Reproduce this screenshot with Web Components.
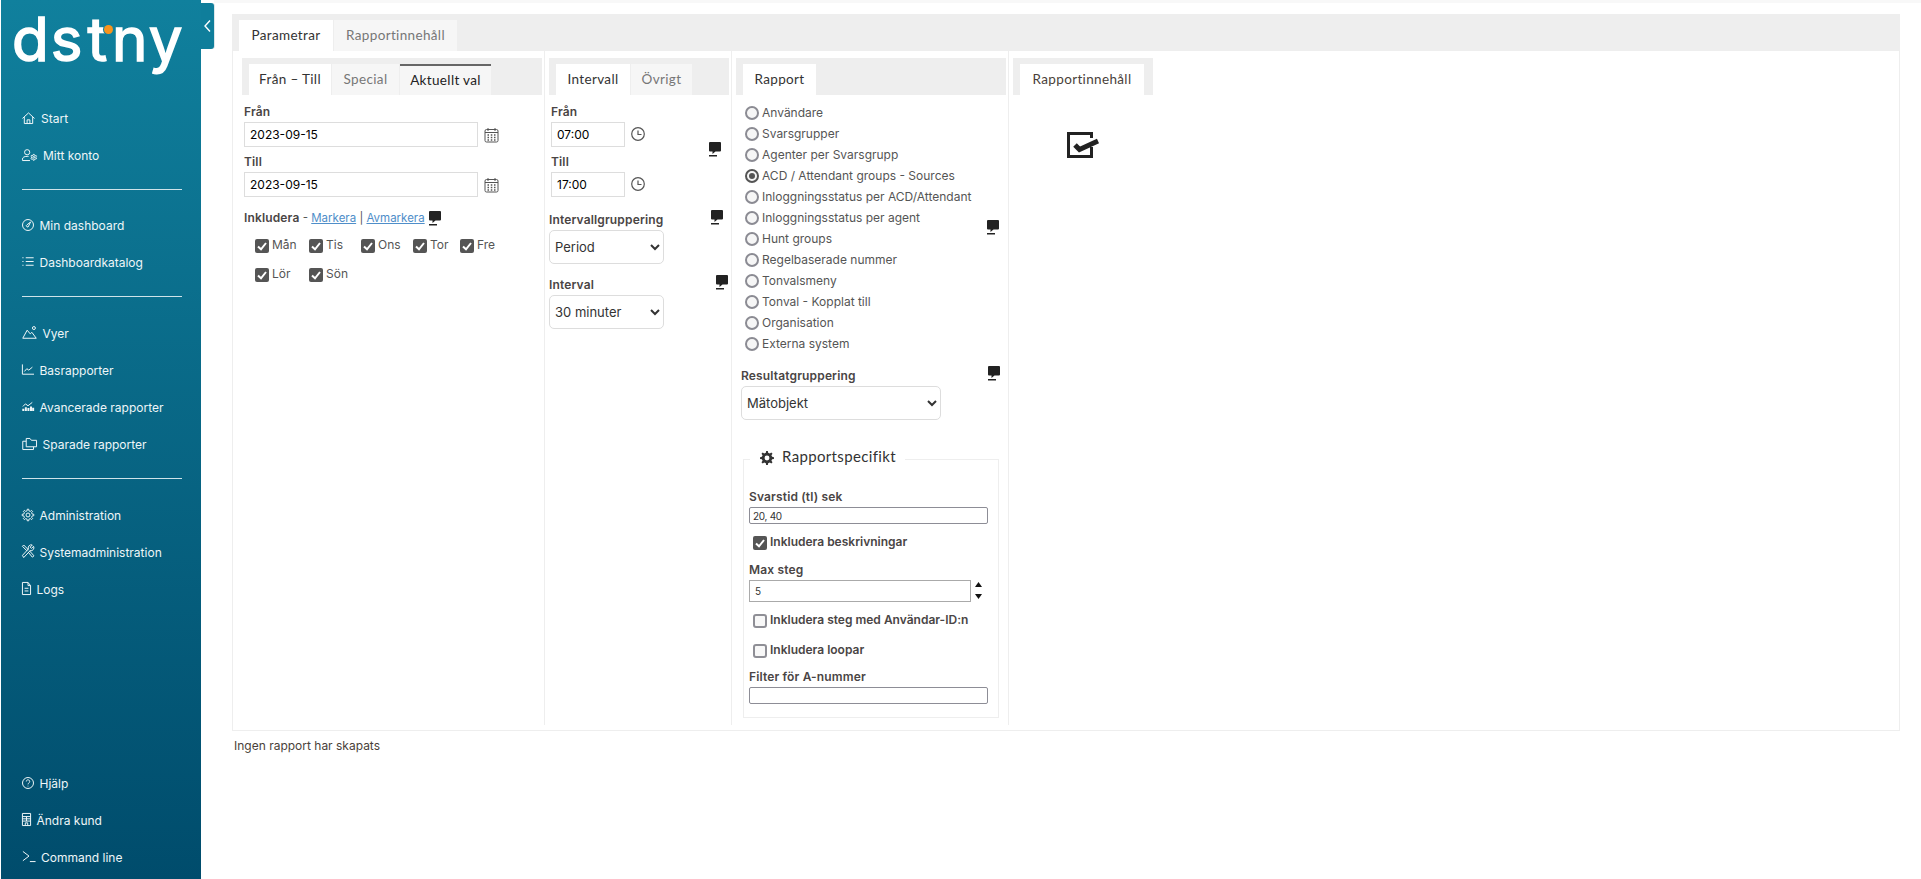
<!DOCTYPE html>
<html lang="sv">
<head>
<meta charset="utf-8">
<title>Rapporter</title>
<style>
  html, body { margin: 0; height: 100%; background: #fff; }
  body { font-family: "Inter", "Liberation Sans", sans-serif; }
</style>
</head>
<body>
<dst-app>
  <dst-sidebar slot="side">
    <dst-nav icon="home" tx="20" w="13" h="12">Start</dst-nav>
    <dst-nav icon="account" tx="22" w="15" h="12">Mitt konto</dst-nav>
    <dst-rule></dst-rule>
    <dst-nav icon="gauge" tx="18.5" w="12" h="12">Min dashboard</dst-nav>
    <dst-nav icon="list" tx="18.5" w="12" h="9">Dashboardkatalog</dst-nav>
    <dst-rule style="--mb:18px"></dst-rule>
    <dst-nav icon="views" tx="21.5" w="15" h="13">Vyer</dst-nav>
    <dst-nav icon="chart" tx="18.5" w="12" h="11">Basrapporter</dst-nav>
    <dst-nav icon="bars" tx="18.5" w="12" h="9">Avancerade rapporter</dst-nav>
    <dst-nav icon="folder" tx="21.5" w="15" h="12">Sparade rapporter</dst-nav>
    <dst-rule style="--mb:18px"></dst-rule>
    <dst-nav icon="gear" tx="18.5" w="12" h="12">Administration</dst-nav>
    <dst-nav icon="tools" tx="18.5" w="12" h="13">Systemadministration</dst-nav>
    <dst-nav icon="doc" tx="15.5" w="9" h="13">Logs</dst-nav>
    <dst-nav slot="bottom" icon="help" tx="18.5" w="12" h="12">Hjälp</dst-nav>
    <dst-nav slot="bottom" icon="building" tx="15.5" w="9" h="13">Ändra kund</dst-nav>
    <dst-nav slot="bottom" icon="prompt" tx="20" w="14" h="11">Command line</dst-nav>
  </dst-sidebar>

  <dst-tabbar class="top">
    <dst-tab active width="94">Parametrar</dst-tab>
    <dst-tab muted width="123">Rapportinnehåll</dst-tab>
  </dst-tabbar>

  <dst-columns>
    <dst-panel style="--w:312px;--pl:9px">
      <dst-tabbar slot="head">
        <dst-tab active width="82">Från – Till</dst-tab>
        <dst-tab muted width="67">Special</dst-tab>
        <dst-tab current width="91">Aktuellt val</dst-tab>
      </dst-tabbar>
      <dst-field label="Från" first><dst-date value="2023-09-15"></dst-date></dst-field>
      <dst-field label="Till"><dst-date value="2023-09-15"></dst-date></dst-field>
      <dst-days></dst-days>
    </dst-panel>

    <dst-panel style="--w:187px;--pl:4px">
      <dst-tabbar slot="head">
        <dst-tab active width="74">Intervall</dst-tab>
        <dst-tab muted width="61">Övrigt</dst-tab>
      </dst-tabbar>
      <dst-comment style="--x:164px;--y:91px"></dst-comment>
      <dst-field label="Från" first><dst-time value="07:00"></dst-time></dst-field>
      <dst-field label="Till"><dst-time value="17:00"></dst-time></dst-field>
      <dst-comment style="--x:166px;--y:159px"></dst-comment>
      <dst-pick label="Intervallgruppering" width="115" style="--mt:16px" value="Period"></dst-pick>
      <dst-comment style="--x:171px;--y:224px"></dst-comment>
      <dst-pick label="Interval" width="115" style="--mt:14px" value="30 minuter"></dst-pick>
    </dst-panel>

    <dst-panel style="--w:277px;--pl:4px">
      <dst-tabbar slot="head"><dst-tab active width="73">Rapport</dst-tab></dst-tabbar>
      <dst-radios style="--mt:7px">
        <dst-radio>Användare</dst-radio>
        <dst-radio>Svarsgrupper</dst-radio>
        <dst-radio>Agenter per Svarsgrupp</dst-radio>
        <dst-radio checked>ACD / Attendant groups - Sources</dst-radio>
        <dst-radio>Inloggningsstatus per ACD/Attendant</dst-radio>
        <dst-radio>Inloggningsstatus per agent</dst-radio>
        <dst-radio>Hunt groups</dst-radio>
        <dst-radio>Regelbaserade nummer</dst-radio>
        <dst-radio>Tonvalsmeny</dst-radio>
        <dst-radio>Tonval - Kopplat till</dst-radio>
        <dst-radio>Organisation</dst-radio>
        <dst-radio>Externa system</dst-radio>
      </dst-radios>
      <dst-comment style="--x:255px;--y:169px"></dst-comment>
      <dst-comment style="--x:256px;--y:315px"></dst-comment>
      <dst-pick label="Resultatgruppering" width="200" style="--mt:15px;--ml:5px" value="Mätobjekt"></dst-pick>
      <dst-specific></dst-specific>
    </dst-panel>

    <dst-panel style="--w:auto;--pl:4px;--hw:140px">
      <dst-tabbar slot="head"><dst-tab active width="124" dark>Rapportinnehåll</dst-tab></dst-tabbar>
      <dst-done></dst-done>
    </dst-panel>
  </dst-columns>
  <dst-status>Ingen rapport har skapats</dst-status>
</dst-app>

<script>
// cog outline, used in the nav and in the legend
function gearPath(cx, cy, ro, ri, n) {
  let d = "";
  for (let i = 0; i < n; i++) {
    const a = (i / n) * Math.PI * 2, s = Math.PI / n;
    const pts = [[ri, a - s * .55], [ro, a - s * .32], [ro, a + s * .32], [ri, a + s * .55]];
    for (const [r, t] of pts) {
      d += (d ? "L" : "M") + (cx + r * Math.sin(t)).toFixed(2) + " " + (cy - r * Math.cos(t)).toFixed(2);
    }
  }
  return d + "z";
}

const ICONS = {
  home: ["1 1 14 13", `<path d="M1.5 8 8 2l6.5 6M3.5 6.5v7h9v-7M6.5 13.5v-4h3v4"/>`],
  account: ["0 0 16 13", `<circle cx="5.5" cy="3.5" r="2.8"/><path d="M.5 12.5V11c0-2 2-3 5-3H7M.5 12.500h8"/><path d="${gearPath(12.5, 9, 3.2, 2.4, 6)}"/><circle cx="12.5" cy="9" r="1"/>`],
  gauge: ["1 1 14 14", `<circle cx="8" cy="8" r="6.4"/><path d="M11 4.500 8.700 9.200a1.300 1.300 0 1 1-1.900-1.400z"/>`],
  list: ["0 2 16 12", `<path d="M5 3h10.500M5 8h10.500M5 13h10.500M.5 3H2M.5 8H2M.5 13H2" stroke-width="1.2"/>`],
  views: ["0 0 16 14", `<path d="M.8 13.200 5.500 4.500l3.300 4 1.700-1.700 4.700 6.400z"/><circle cx="12.7" cy="2.2" r="1.6"/>`],
  chart: ["1 1 15 14", `<path d="M1.500 1.500V14H16M4 10.500l3-3.500 2.500 1.800L14 5"/>`],
  bars: ["1 2 14 12", `<path d="M2 8l3-3.500 3 2.500 5-4.500"/><path d="M2.500 14v-3M5.500 14V9M8.500 14v-4M11.500 14V8M14 14V9.500" stroke-width="2"/>`],
  folder: ["0 1 16 13", `<path d="M4.500 10.500V1.500h4L10 3.500h5.500v7z"/><path d="M4.500 4.500H.8V13.500h11.500v-3"/>`],
  gear: ["1 1 14 14", `<path d="${gearPath(8, 8, 6.8, 5, 8)}"/><circle cx="8" cy="8" r="2.3"/>`],
  tools: ["1 1 14 15", `<path d="M1.500 2.500l1.500-1.500 5 5-1.500 1.500zM8 9l5 6 2-1.500L9.500 7.500M14.500 2.500 12 5l-1.500-1.500L13 1a3.500 3.500 0 0 0-4.500 4.500L1.500 13l1.500 2.500L10.500 7.500a3.500 3.500 0 0 0 4-5z"/>`],
  doc: ["2.5 1 10.5 14.5", `<path d="M3 1.500h6.500L12.500 5v10H3zM9.500 1.500V5h3M5.500 8H10M5.500 11H10"/>`],
  help: ["1 1 14 14", `<circle cx="8" cy="8" r="6.4"/><path d="M6 6.200a2 2 0 1 1 3 1.800c-.7.400-1 .800-1 1.600M8 11.200v.8"/>`],
  building: ["2.5 1 11 14.5", `<path d="M3 1.500h10V15H3zM3 5h10M8 5v5M3 7.500h10M3 10h10M6.500 15v-3h3v3"/>`],
  prompt: ["0 1 16 13", `<path d="M1 1.500l7 5.500-7 5.500M9 13.500h6.500"/>`]
};

function define(name, css, html, init) {
  customElements.define(name, class extends HTMLElement {
    constructor() {
      super();
      this.attachShadow({ mode: "open" });
    }
    connectedCallback() {
      this.shadowRoot.innerHTML = `<style>${css}</style>${typeof html === "function" ? html(this) : html}`;
      if (init) init(this);
    }
  });
}

const SANS = `"Inter", "Liberation Sans", sans-serif`;
const ROUND = `"Lato", "Open Sans", sans-serif`;
const LABEL = `font: 600 12px/14px ${SANS}; letter-spacing: .15px; color: #4a4545;`;

define("dst-app", `
  :host { display: flex; min-height: 879px; box-sizing: border-box; padding-left: 1px; }
  .main { flex: 1; min-width: 0; padding: 14px 21px 0 31px; position: relative; }
  .main::before { content: ""; position: absolute; left: 13px; right: 0; top: 0; height: 3px; background: #f8f8f8; }
`, `<slot name="side"></slot><div class="main"><slot></slot></div>`);

define("dst-sidebar", `
  :host {
    display: flex; flex-direction: column; width: 200px; height: 879px; box-sizing: border-box;
    background: linear-gradient(#10809d, #004c6c); position: relative; color: #fff;
    font: 12px/37px ${SANS};
  }
  .toggle {
    position: absolute; left: 200px; top: 3px; width: 13px; height: 46px; background: #0f7e9b;
    border-radius: 0 3px 3px 0; display: flex; align-items: center; justify-content: center;
    box-shadow: 1px 0 0 #dbe7ea;
  }
  .logo { height: 79px; box-sizing: border-box; position: relative; padding: 9px 0 0 11px; }
  .word {
    font: 400 60px/1 ${SANS}; letter-spacing: 2px; color: #fff; display: block;
    -webkit-text-stroke: 1.6px #fff; white-space: nowrap;
  }
  .word span { margin-left: 3px; }
  .dot { position: absolute; left: 103px; top: 25px; width: 9px; height: 9px; border-radius: 50%; background: #f7941d; box-shadow: 0 0 0 1px #10809d; }
  .nav { padding: 21px 0 0; flex: 1; }
  .bottom { padding-bottom: 3px; }
`, `
  <div class="toggle"><svg width="9" height="14" viewBox="0 0 9 14" fill="none" stroke="#fff" stroke-width="1.4"><path d="M7 1.500 2 7l5 5.500"/></svg></div>
  <div class="logo"><span class="word">ds<span>t</span><span>ny</span></span><i class="dot"></i></div>
  <div class="nav"><slot></slot></div>
  <div class="bottom"><slot name="bottom"></slot></div>
`);

define("dst-nav", `
  :host { display: flex; align-items: center; height: 37px; padding-left: 21px; color: #eef6f8; white-space: nowrap; }
  .ic { display: flex; align-items: center; flex: none; margin-right: -1px; }
  svg { fill: none; stroke: #eef6f8; margin-top: -2px; overflow: visible; }
  svg * { vector-effect: non-scaling-stroke; }
`, el => {
  const [vb, body] = ICONS[el.getAttribute("icon")];
  const a = n => el.getAttribute(n);
  return `<span class="ic" style="width:${a("tx")}px"><svg viewBox="${vb}" width="${a("w")}" height="${a("h")}" preserveAspectRatio="none">${body}</svg></span><slot></slot>`;
});

define("dst-rule", `
  :host { display: block; height: 1px; background: #cfe3e9; width: 160px; margin: 15px 0 var(--mb, 17px) 21px; }
`, ``);

define("dst-tabbar", `
  :host { display: flex; align-items: flex-end; height: 37px; box-sizing: border-box; padding-left: 7px; background: #eee; gap: 1px; }
`, `<slot></slot>`);

define("dst-tab", `
  :host {
    display: flex; align-items: center; justify-content: center; height: 31px; box-sizing: border-box;
    background: #fff; color: #333; font: 13.5px/1 ${ROUND}; letter-spacing: .35px; white-space: nowrap;
  }
  :host([muted]) { background: #f6f6f6; color: #777; }
  :host([current]) { background: #f6f6f6; color: #222; border-top: 2px solid #666; }
  :host([dark]) { color: #4a3f3a; }
`, el => {
  el.style.width = el.getAttribute("width") + "px";
  return `<slot></slot>`;
});

define("dst-columns", `
  :host {
    display: flex; height: 680px; box-sizing: border-box; border: 1px solid #eee; border-top: 0;
    padding-bottom: 5px;
  }
`, `<slot></slot>`);

define("dst-panel", `
  :host {
    display: block; flex: 0 0 var(--w); box-sizing: border-box; padding: 7px 2px 0 var(--pl);
    border-right: 1px solid #eee; position: relative; color: #444;
    font: 12px/14px ${SANS};
  }
  :host(:last-child) { flex: 1; border-right: 0; }
  .head { width: var(--hw, auto); }
`, `<div class="head"><slot name="head"></slot></div><slot></slot>`);

define("dst-field", `
  :host { display: block; margin-top: 8px; padding-left: 2px; }
  :host([first]) { margin-top: 10px; }
  label { display: block; ${LABEL} margin-bottom: 3px; }
`, el => `<label>${el.getAttribute("label")}</label><slot></slot>`);

const BOXINPUT = `
  input {
    display: block; box-sizing: border-box; height: 25px; border: 1px solid #ddd; background: #fff;
    font: 12px ${SANS}; color: #000; padding: 0 5px; margin: 0; outline: 0; border-radius: 0;
  }`;

define("dst-date", `
  :host { display: flex; align-items: center; gap: 6px; }
  ${BOXINPUT}
  input { width: 234px; }
  svg { width: 15px; height: 16px; fill: none; stroke: #555; }
`, el => `<input value="${el.getAttribute("value")}"><svg viewBox="0 0 15 16">
  <rect x="1" y="2.5" width="13" height="12.5" rx="1.5"/><path d="M1 5.500h13M4 1v3M11 1v3"/>
  <path d="M3.500 8H5M6.800 8h1.500M10 8h1.500M3.500 10.500H5M6.800 10.500h1.500M10 10.500h1.500M3.500 13H5M6.800 13h1.500M10 13h1.500" stroke-width="1.4"/></svg>`);

define("dst-time", `
  :host { display: flex; align-items: center; gap: 6px; }
  ${BOXINPUT}
  input { width: 74px; }
  svg { width: 14px; height: 14px; fill: none; stroke: #555; stroke-width: 1.2; margin-top: -1px; }
`, el => `<input value="${el.getAttribute("value")}"><svg viewBox="0 0 14 14"><circle cx="7" cy="7" r="6.3"/><path d="M7 3.500v4h3.500"/></svg>`);

define("dst-comment", `
  :host { position: absolute; left: var(--x); top: var(--y); width: 12px; height: 15px; display: block; }
  svg { display: block; fill: #222; }
`, `<svg width="12" height="15" viewBox="0 0 12 15"><path d="M1 0h10a1 1 0 0 1 1 1v7.500a1 1 0 0 1-1 1H6.500L3.500 12V9.500H1a1 1 0 0 1-1-1V1a1 1 0 0 1 1-1z"/><rect x="0" y="13" width="8" height="1.5"/></svg>`);

define("dst-check", `
  :host { display: inline-flex; align-items: center; color: var(--c, #555); font: var(--f, 400 12px/14px ${SANS}); white-space: nowrap; }
  .box { width: 14px; height: 14px; box-sizing: border-box; border-radius: 2px; margin-right: 3px; flex: none; display: block; }
  .on { background: #555; }
  .off { background: #f8f8f8; border: 2px solid #8f8f96; border-radius: 3px; }
  span { margin-top: -2px; }
`, el => (el.hasAttribute("checked")
  ? `<svg class="box on" viewBox="0 0 14 14" fill="none" stroke="#fff" stroke-width="2"><path d="M3 7.500 6 10.300 11 4"/></svg>`
  : `<i class="box off"></i>`) + `<span><slot></slot></span>`);

define("dst-days", `
  :host { display: block; padding-left: 2px; margin-top: 14px; font-size: 11.5px; color: #555; }
  b { ${LABEL} }
  a { color: #4f8ec9; text-decoration: underline; }
  .wrap { position: relative; }
  .row { display: flex; padding-left: 11px; margin-top: 14px; height: 14px; }
  .row + .row { margin-top: 15px; }
  .c { display: block; }
  dst-comment { --x: 185px; --y: 0px; }
`, `
  <div class="wrap"><b>Inkludera</b> - <a>Markera</a> | <a>Avmarkera</a><dst-comment></dst-comment></div>
  <div class="row">
    <span class="c" style="width:54px"><dst-check checked>Mån</dst-check></span>
    <span class="c" style="width:52px"><dst-check checked>Tis</dst-check></span>
    <span class="c" style="width:52px"><dst-check checked>Ons</dst-check></span>
    <span class="c" style="width:47px"><dst-check checked>Tor</dst-check></span>
    <span class="c"><dst-check checked>Fre</dst-check></span>
  </div>
  <div class="row">
    <span class="c" style="width:54px"><dst-check checked>Lör</dst-check></span>
    <span class="c"><dst-check checked>Sön</dst-check></span>
  </div>
`);

define("dst-pick", `
  :host { display: block; margin-top: var(--mt, 0); margin-left: var(--ml, 0); }
  label { display: block; ${LABEL} margin-bottom: 3px; }
  select {
    display: block; box-sizing: border-box; height: 34px; border: 1px solid #ddd; border-radius: 5px;
    background-color: #fff; color: #333; font: 13px ${SANS}; padding: 0 1px; margin: 0; outline: 0;
  }
`, el => `<label>${el.getAttribute("label")}</label><select style="width:${el.getAttribute("width")}px"><option>${el.getAttribute("value")}</option></select>`);

define("dst-radios", `
  :host { display: block; margin-top: var(--mt, 0); padding-left: 9px; }
`, `<slot></slot>`);

define("dst-radio", `
  :host { display: flex; align-items: center; height: 21px; color: #555; font-size: 12px; white-space: nowrap; }
  i { width: 14px; height: 14px; box-sizing: border-box; border-radius: 50%; border: 2px solid #8b8b93; background: #f6f6f6; margin-right: 3px; display: flex; align-items: center; justify-content: center; flex: none; }
  :host([checked]) i { border-color: #555; }
  :host([checked]) i::after { content: ""; width: 6px; height: 6px; border-radius: 50%; background: #555; }
`, `<i></i><slot></slot>`);

define("dst-specific", `
  :host {
    display: block; box-sizing: border-box; width: 256px; height: 259px; border: 1px solid #eee;
    margin: 39px 0 0 7px; padding: 0 5px; position: relative; color: #444;
  }
  .legend {
    position: absolute; left: 6px; top: -13px; background: #fff; padding: 0 9px 0 10px;
    display: flex; align-items: center; gap: 8px; font: 15px/18px ${ROUND}; letter-spacing: .35px; color: #333;
  }
  .legend svg { width: 14px; height: 14px; fill: #333; display: block; margin-top: 3px; }
  label { display: block; ${LABEL} }
  input {
    display: block; box-sizing: border-box; border: 1px solid #8d8d96; border-radius: 2px; height: 17px;
    width: 239px; font: 10px ${SANS}; letter-spacing: -.3px; color: #333; padding: 0 3px; margin: 3px 0 0; outline: 0; background: #fff;
  }
  .num { display: flex; align-items: flex-start; gap: 4px; margin-top: 3px; }
  .num input { width: 222px; height: 22px; border-color: #aaa; border-radius: 0; margin: 0; padding: 0 5px; }
  .spin { display: flex; flex-direction: column; gap: 7px; padding-top: 2px; }
  .spin svg { display: block; }
  .line { display: block; padding-left: 4px; --f: 600 12px/14px ${SANS}; --c: #4a4545; height: 14px; }
`, `
  <div class="legend"><svg viewBox="0 0 16 16"><path fill-rule="evenodd" d="${gearPath(8, 8, 8, 6, 8)}M8 5.200a2.800 2.800 0 1 0 0 5.600 2.800 2.800 0 0 0 0-5.600z"/></svg>Rapportspecifikt</div>
  <label style="margin-top:30px">Svarstid (tl) sek</label>
  <input value="20, 40">
  <span class="line" style="margin-top:12px"><dst-check checked>Inkludera beskrivningar</dst-check></span>
  <label style="margin-top:13px">Max steg</label>
  <div class="num"><input value="5"><div class="spin">
    <svg width="7" height="5" viewBox="0 0 7 5" fill="#111"><path d="M3.500 0 7 5H0z"/></svg>
    <svg width="7" height="5" viewBox="0 0 7 5" fill="#111"><path d="M0 0h7L3.500 5z"/></svg>
  </div></div>
  <span class="line" style="margin-top:12px"><dst-check>Inkludera steg med Användar-ID:n</dst-check></span>
  <span class="line" style="margin-top:16px"><dst-check>Inkludera loopar</dst-check></span>
  <label style="margin-top:12px">Filter för A-nummer</label>
  <input>
`);

define("dst-done", `
  :host { display: block; margin: 37px 0 0 54px; width: 33px; height: 27px; }
`, `<svg width="33" height="27" viewBox="0 0 33 27" fill="none" stroke="#222"><path d="M24.500 6V1.500H1.500v23h23V15" stroke-width="3"/><path d="M8 13 12.500 17.500 31 9" stroke-width="5"/></svg>`);

define("dst-status", `
  :host { display: block; margin: 8px 0 0 2px; color: #4a3f3a; font: 12px/14px ${SANS}; }
`, `<slot></slot>`);
</script>
</body>
</html>
